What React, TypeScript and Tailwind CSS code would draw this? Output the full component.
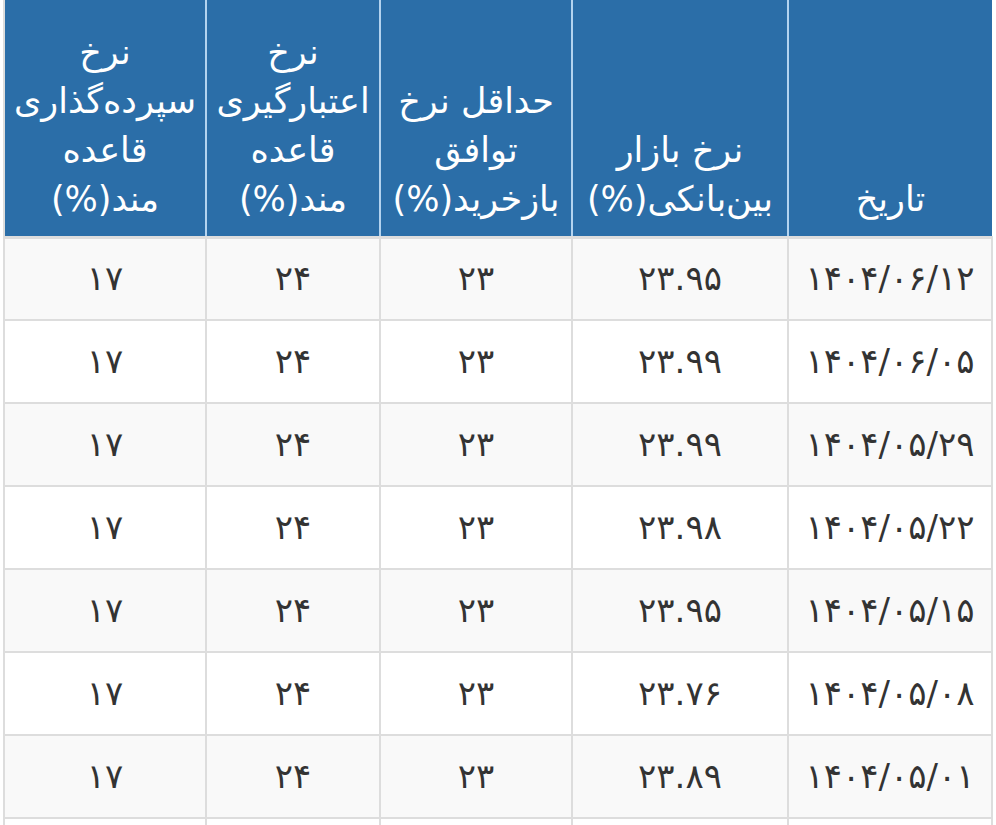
import React from 'react'

// rates table, rendered right-to-left like the source page
const rows = [
    { date: '۱۴۰۴/۰۶/۱۲', interbank: '۲۳.۹۵' },
    { date: '۱۴۰۴/۰۶/۰۵', interbank: '۲۳.۹۹' },
    { date: '۱۴۰۴/۰۵/۲۹', interbank: '۲۳.۹۹' },
    { date: '۱۴۰۴/۰۵/۲۲', interbank: '۲۳.۹۸' },
    { date: '۱۴۰۴/۰۵/۱۵', interbank: '۲۳.۹۵' },
    { date: '۱۴۰۴/۰۵/۰۸', interbank: '۲۳.۷۶' },
    { date: '۱۴۰۴/۰۵/۰۱', interbank: '۲۳.۸۹' },
]

const headers: string[][] = [
    ['تاریخ'],
    ['نرخ بازار', 'بین‌بانکی(%)'],
    ['حداقل نرخ', 'توافق', 'بازخرید(%)'],
    ['نرخ', 'اعتبارگیری', 'قاعده', 'مند(%)'],
    ['نرخ', 'سپرده‌گذاری', 'قاعده', 'مند(%)'],
]

const widths = ['w-[204px]', 'w-[216px]', 'w-[192px]', 'w-[174px]', 'w-[202px]']

export default function App() {
    return (
        <div
            dir="rtl"
            className="w-[996px] h-[825px] overflow-hidden bg-white px-[3px]"
            style={{ fontFamily: '"DejaVu Sans", "Noto Sans", sans-serif' }}
        >
            <table className="w-[990px] table-fixed border-collapse">
                <colgroup>
                    {widths.map((w, i) => (
                        <col key={i} className={w} />
                    ))}
                </colgroup>
                <thead>
                    <tr className="h-[237px] bg-[#2b6ea8] border-b-[3px] border-[#dddddd]">
                        {headers.map((lines, i) => (
                            <th
                                key={i}
                                className="align-bottom pb-[12px] px-1 text-center font-normal text-white text-[35px] leading-[49px] border-x-2 border-x-[#b3d3ef] first:border-r-0 last:border-l-[#dddddd]"
                            >
                                {lines.map((l, j) => (
                                    <div key={j} className="whitespace-nowrap">{l}</div>
                                ))}
                            </th>
                        ))}
                    </tr>
                </thead>
                <tbody>
                    {rows.map((r, i) => (
                        <tr
                            key={i}
                            className={`h-[83px] ${i % 2 === 0 ? 'bg-[#f9f9f9]' : 'bg-white'}`}
                        >
                            {[r.date, r.interbank, '۲۳', '۲۴', '۱۷'].map((v, j) => (
                                <td
                                    key={j}
                                    className="border-2 border-[#dddddd] text-center align-middle text-[#333333] text-[34px]"
                                >
                                    {v}
                                </td>
                            ))}
                        </tr>
                    ))}
                    {/* next row, only its top edge shows in the view */}
                    <tr className="h-[83px] bg-white">
                        {widths.map((_, j) => (
                            <td key={j} className="border-2 border-[#dddddd]" />
                        ))}
                    </tr>
                </tbody>
            </table>
        </div>
    )
}
